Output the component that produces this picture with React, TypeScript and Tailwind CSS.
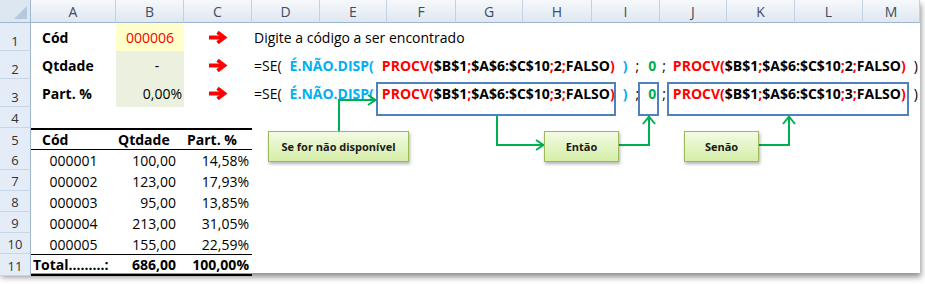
import * as React from "react";

const COLS =
  "grid grid-cols-[31px_85px_68px_68px_68px_67px_69px_67px_69px_68px_67px_68px_68px_57px]";
const LETTERS = ["A", "B", "C", "D", "E", "F", "G", "H", "I", "J", "K", "L", "M"];

function RedArrow() {
  return (
    <svg width="19" height="13" viewBox="0 0 19 13">
      <path d="M0 6.5H14" stroke="#ff0000" strokeWidth="4" />
      <path d="M8.5 1.2L15.5 6.5L8.5 11.8" stroke="#ff0000" strokeWidth="3.6" fill="none" strokeLinejoin="miter" />
    </svg>
  );
}

function Procv({ k, className }: { k: string; className: string }) {
  return (
    <span className={`font-bold ${className}`}>
      <span className="text-[#ff0000]">PROCV(</span>$B$1
      <span className="text-[#ff0000]">;</span>$A$6:$C$10
      <span className="text-[#ff0000]">;</span>
      {k}
      <span className="text-[#ff0000]">;</span>FALSO
      <span className="text-[#ff0000]">)</span>
    </span>
  );
}

function Formula({ k }: { k: string }) {
  return (
    <div className="col-[5/15] flex items-center whitespace-nowrap pl-[2px]">
      <span>=SE(</span>
      <span className="ml-[8px] font-bold text-[#00b0f0]">É.NÃO.DISP(</span>
      <Procv k={k} className="ml-[8px]" />
      <span className="ml-[8px] font-bold text-[#00b0f0]">)</span>
      <span className="ml-[8px]">;</span>
      <span className="ml-[9px] font-bold text-[#00b050]">0</span>
      <span className="ml-[6px]">;</span>
      <Procv k={k} className="ml-[7px]" />
      <span className="ml-[8px]">)</span>
    </div>
  );
}

function Row({ n, h, children }: { n: number; h: string; children?: React.ReactNode }) {
  return (
    <div className={`${COLS} ${h}`}>
      <div className="flex items-end justify-center border-r border-b border-r-[#9eb6ce] border-b-[#c9d6e6] bg-[#e4ecf7] text-[13px] leading-[18px] text-[#333]">
        {n}
      </div>
      {children}
    </div>
  );
}

const data = [
  ["000001", "100,00", "14,58%"],
  ["000002", "123,00", "17,93%"],
  ["000003", "95,00", "13,85%"],
  ["000004", "213,00", "31,05%"],
  ["000005", "155,00", "22,59%"],
];

function Callout({ label, className }: { label: string; className: string }) {
  return (
    <div
      className={`absolute flex h-[31px] items-center justify-center border border-[#9bbb59] bg-gradient-to-b from-[#f3fae4] to-[#d5eea6] text-[11px] font-bold text-[#1a1a1a] shadow-[1px_2px_3px_rgba(0,0,0,0.3)] ${className}`}
    >
      {label}
    </div>
  );
}

export default function App() {
  return (
    <div className="h-[284px] w-[925px] overflow-hidden bg-white font-['Open_Sans',sans-serif] text-[14px] leading-[19px] text-black">
      <div className="relative h-[273px] w-[920px] bg-white shadow-[1px_4px_6px_rgba(0,0,0,0.45)]">
        {/* column headers */}
        <div className={`${COLS} h-[23px]`}>
          <div className="relative border-r border-b border-[#9eb6ce] bg-[#dde7f2]">
            <svg className="absolute right-[3px] bottom-[3px]" width="13" height="13" viewBox="0 0 13 13">
              <path d="M13 0V13H0Z" fill="#b6c8de" />
            </svg>
          </div>
          {LETTERS.map((l) => (
            <div
              key={l}
              className="flex items-center justify-center border-r border-b border-r-[#c3d1e2] border-b-[#9eb6ce] bg-gradient-to-b from-[#f6f9fc] to-[#dfe7f1] text-[14px] text-[#3d4d63]"
            >
              {l}
            </div>
          ))}
        </div>

        <Row n={1} h="h-[28px]">
          <div className="flex items-center pl-[11px] font-bold">Cód</div>
          <div className="flex items-center justify-center bg-[#ffffcc] text-[#ff0000]">000006</div>
          <div className="flex items-center justify-center">
            <RedArrow />
          </div>
          <div className="col-[5/15] flex items-center whitespace-nowrap pl-[2px]">Digite a código a ser encontrado</div>
        </Row>
        <Row n={2} h="h-[28px]">
          <div className="flex items-center pl-[11px] font-bold">Qtdade</div>
          <div className="flex items-center justify-center bg-[#ebf1de] pl-[14px]">-</div>
          <div className="flex items-center justify-center">
            <RedArrow />
          </div>
          <Formula k="2" />
        </Row>
        <Row n={3} h="h-[28px]">
          <div className="flex items-center pl-[11px] font-bold">Part. %</div>
          <div className="flex items-center justify-end bg-[#ebf1de] pr-[2px]">0,00%</div>
          <div className="flex items-center justify-center">
            <RedArrow />
          </div>
          <Formula k="3" />
        </Row>
        <Row n={4} h="h-[21px]" />
        <Row n={5} h="h-[21px]">
          <div className="flex items-end border-t-2 border-b border-black pl-[11px] font-bold">Cód</div>
          <div className="flex items-end border-t-2 border-b border-black pl-[2px] font-bold">Qtdade</div>
          <div className="flex items-end border-t-2 border-b border-black pl-[3px] font-bold">Part. %</div>
        </Row>
        {data.map((r, i) => (
          <Row key={r[0]} n={6 + i} h="h-[21px]">
            <div className="flex items-end justify-center">{r[0]}</div>
            <div className="flex items-end justify-end pr-[8px]">{r[1]}</div>
            <div className="flex items-end justify-end pr-[3px]">{r[2]}</div>
          </Row>
        ))}
        <Row n={11} h="h-[19px]">
          <div className="flex items-end border-t border-b-2 border-black pl-[2px] font-bold">Total.........:</div>
          <div className="flex items-end justify-end border-t border-b-2 border-black pr-[8px] font-bold">686,00</div>
          <div className="flex items-end justify-end border-t border-b-2 border-black pr-[3px] font-bold">100,00%</div>
        </Row>

        {/* highlight boxes and connectors */}
        <svg className="pointer-events-none absolute top-0 left-0" width="920" height="273" viewBox="0 0 920 273">
          <g fill="none" stroke="#4f81bd" strokeWidth="2">
            <rect x="377" y="83" width="238" height="32" />
            <rect x="639" y="83" width="19" height="32" />
            <rect x="668" y="83" width="240" height="32" />
          </g>
          <g fill="none" stroke="#00b050" strokeWidth="2">
            <path d="M339 131V100H375" />
            <path d="M368 95L375.5 100L368 105" />
            <path d="M497 116V145H543" />
            <path d="M536 140L543.5 145L536 150" />
            <path d="M619 145H649V117" />
            <path d="M643 124L649 116.5L655 124" />
            <path d="M759 145H789V117" />
            <path d="M783 124L789 116.5L795 124" />
          </g>
        </svg>
        <Callout label="Se for não disponível" className="top-[131px] left-[268px] w-[141px]" />
        <Callout label="Então" className="top-[131px] left-[544px] w-[75px]" />
        <Callout label="Senão" className="top-[131px] left-[684px] w-[75px]" />
      </div>
    </div>
  );
}
